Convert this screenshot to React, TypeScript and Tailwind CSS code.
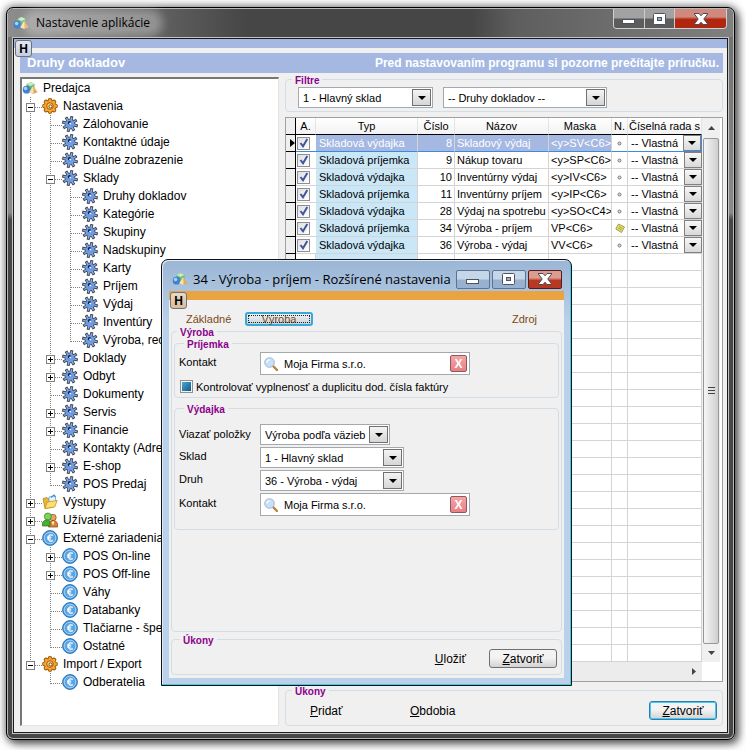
import { useState } from "react";
import type { ReactNode } from "react";

type IconName = "gear" | "cog" | "folder" | "users" | "euro";

type TreeItem = {
  label: string;
  icon: IconName;
  open?: boolean;
  children?: TreeItem[];
};

const leaf = (label: string, icon: IconName = "cog"): TreeItem => ({ label, icon });

const TREE: TreeItem[] = [
  {
    label: "Nastavenia",
    icon: "gear",
    open: true,
    children: [
      leaf("Zálohovanie"),
      leaf("Kontaktné údaje"),
      leaf("Duálne zobrazenie"),
      {
        label: "Sklady",
        icon: "cog",
        open: true,
        children: [
          leaf("Druhy dokladov"),
          leaf("Kategórie"),
          leaf("Skupiny"),
          leaf("Nadskupiny"),
          leaf("Karty"),
          leaf("Príjem"),
          leaf("Výdaj"),
          leaf("Inventúry"),
          leaf("Výroba, recepty"),
        ],
      },
      { label: "Doklady", icon: "cog", children: [] },
      { label: "Odbyt", icon: "cog", children: [] },
      leaf("Dokumenty"),
      { label: "Servis", icon: "cog", children: [] },
      { label: "Financie", icon: "cog", children: [] },
      leaf("Kontakty (Adresár)"),
      { label: "E-shop", icon: "cog", children: [] },
      leaf("POS Predaj"),
    ],
  },
  { label: "Výstupy", icon: "folder", children: [] },
  { label: "Užívatelia", icon: "users", children: [] },
  {
    label: "Externé zariadenia",
    icon: "euro",
    open: true,
    children: [
      { label: "POS On-line", icon: "euro", children: [] },
      { label: "POS Off-line", icon: "euro", children: [] },
      leaf("Váhy", "euro"),
      leaf("Databanky", "euro"),
      leaf("Tlačiarne - špeciálne", "euro"),
      leaf("Ostatné", "euro"),
    ],
  },
  {
    label: "Import / Export",
    icon: "gear",
    open: true,
    children: [leaf("Odberatelia", "euro")],
  },
];

const ROWS = [
  { type: "Skladová výdajka", num: 8, name: "Skladový výdaj", mask: "<y>SV<C6>" },
  { type: "Skladová príjemka", num: 9, name: "Nákup tovaru", mask: "<y>SP<C6>" },
  { type: "Skladová výdajka", num: 10, name: "Inventúrny výdaj", mask: "<y>IV<C6>" },
  { type: "Skladová príjemka", num: 11, name: "Inventúrny príjem", mask: "<y>IP<C6>" },
  { type: "Skladová výdajka", num: 28, name: "Výdaj na spotrebu", mask: "<y>SO<C4>" },
  { type: "Skladová príjemka", num: 34, name: "Výroba - príjem", mask: "VP<C6>", note: true },
  { type: "Skladová výdajka", num: 36, name: "Výroba - výdaj", mask: "VV<C6>" },
];

const EMPTY_ROWS = 24;

function Logo() {
  return (
    <svg viewBox="0 0 16 16" className="size-4 shrink-0">
      <path d="M4.500 4 8.500 2l4 2v4.500L8.500 10.500 4.500 8.500z" fill="#6dbb72" />
      <path d="M4.500 4 8.500 2l4 2-4 2z" fill="#c9ecc0" />
      <circle cx="4.600" cy="9.700" r="3.900" fill="#3f83cf" />
      <circle cx="3.600" cy="8.500" r="1.800" fill="#a9d2f5" />
      <path d="M11.200 6 15.600 12.300 11.500 14 7.300 12.300z" fill="#dfae5c" />
      <path d="M11.200 6 11.500 14 7.300 12.300z" fill="#f8e2ae" />
    </svg>
  );
}

function ItemIcon({ name }: { name: IconName }) {
  if (name === "gear") {
    return (
      <svg viewBox="0 0 16 16" className="size-4 shrink-0">
        <g stroke="#9a5205" strokeWidth="4.600" strokeLinecap="round">
          <path d="M8 2.400v11.200M2.400 8h11.200M4 4l8 8M12 4l-8 8" />
        </g>
        <g stroke="#f6a52e" strokeWidth="2.800" strokeLinecap="round">
          <path d="M8 2.400v11.200M2.400 8h11.200M4 4l8 8M12 4l-8 8" />
        </g>
        <circle cx="8" cy="8" r="5.200" fill="#f7a832" />
        <circle cx="8" cy="8" r="3.300" fill="#ffd079" stroke="#a15a08" />
        <circle cx="8.500" cy="8.400" r="1.500" fill="#fff" stroke="#7d4208" />
      </svg>
    );
  }
  if (name === "cog") {
    return (
      <svg viewBox="0 0 16 16" className="size-4 shrink-0">
        <g transform="rotate(14 8 8)">
          <path d="M8 0v16M0 8h16M2.500 2.500l11 11M13.500 2.500l-11 11" stroke="#3c4350" strokeWidth="3" />
          <circle cx="8" cy="8" r="5.300" fill="#3c4c68" />
          <path d="M8 1v14M1 8h14M3.200 3.200l9.600 9.600M12.800 3.200l-9.600 9.600" stroke="#8aaee6" strokeWidth="1.400" />
          <circle cx="8" cy="8" r="4.500" fill="#6e9ce4" />
        </g>
        <circle cx="7.500" cy="6.800" r="1.700" fill="#17233a" />
        <circle cx="8.200" cy="7.500" r="1" fill="#fff" />
      </svg>
    );
  }
  if (name === "folder") {
    return (
      <svg viewBox="0 0 16 16" className="size-4 shrink-0">
        <path d="M1 4.500 5 3.500l1 1.500 5-1v9L3 14.500z" fill="#e9b83a" stroke="#a87b16" strokeWidth=".7" />
        <path d="m7 3 6-1.500 1 6-7 2z" fill="#eaf4ff" stroke="#5b8fc4" strokeWidth=".7" />
        <path d="m9 3.500 3-2.300 1.500 2" fill="none" stroke="#2e9ad4" strokeWidth="1.200" />
        <path d="M3 14.500 5.200 8l10-1.500-2.500 6.500z" fill="#ffe06d" stroke="#b5871b" strokeWidth=".7" />
      </svg>
    );
  }
  if (name === "users") {
    return (
      <svg viewBox="0 0 16 16" className="size-4 shrink-0">
        <circle cx="11" cy="5.500" r="3.200" fill="#e8a35c" stroke="#81511f" strokeWidth=".7" />
        <path d="M6.500 15V11.500q1-3 4.500-3t4.500 3V15z" fill="#d98432" stroke="#81410f" strokeWidth=".7" />
        <circle cx="5.800" cy="4.500" r="3.500" fill="#7dd35d" stroke="#2c7f1e" strokeWidth=".7" />
        <path d="M.5 14v-3.500q1-2.500 5-2.500l2.500 1V14z" fill="#4cae35" stroke="#22701a" strokeWidth=".7" />
        <path d="m9.500 9.500 1.500 4 1.500-4z" fill="#fff1d2" />
      </svg>
    );
  }
  return (
    <svg viewBox="0 0 16 16" className="size-4 shrink-0">
      <circle cx="8" cy="8" r="7.400" fill="#3c8fd6" stroke="#2f74b6" />
      <circle cx="8" cy="8" r="5.900" fill="#5aa5e4" stroke="#b4dcf8" strokeWidth=".9" />
      <path d="M10.800 5.400Q6.800 3.400 6.300 8q.5 4.600 4.500 2.600M5 7.200h4.200M5 9h4.200" fill="none" stroke="#fff" strokeWidth="1.200" />
    </svg>
  );
}

// Dotted guide lines in front of a tree item, with the plus/minus box on top
function Branch({ last, state }: { last: boolean; state?: "open" | "closed" }) {
  return (
    <svg viewBox="0 0 20 18" className="block h-[18px] w-5 shrink-0" shapeRendering="crispEdges">
      <path d={last ? "M8.500 0V11" : "M8.500 0V18"} stroke="#808080" strokeDasharray="1 1" fill="none" />
      <path d="M9 10.500H20" stroke="#808080" strokeDasharray="1 1" fill="none" />
      {state && (
        <>
          <rect x="4.500" y="6.500" width="8" height="8" fill="#fff" stroke="#808080" />
          <path d={state === "open" ? "M6 10.500h5" : "M6 10.500h5M8.500 8v5"} stroke="#000" />
        </>
      )}
    </svg>
  );
}

function Guide({ line }: { line: boolean }) {
  return (
    <svg viewBox="0 0 20 18" className="block h-[18px] w-5 shrink-0" shapeRendering="crispEdges">
      {line && <path d="M8.500 0V18" stroke="#808080" strokeDasharray="1 1" />}
    </svg>
  );
}

function TreeRows({ items, guides }: { items: TreeItem[]; guides: boolean[] }) {
  const [toggled, setToggled] = useState<{ [key: string]: boolean }>({});

  return (
    <ul>
      {items.map((item, i) => {
        const last = i === items.length - 1;
        const open = toggled[item.label] ?? !!item.open;
        return (
          <li key={item.label}>
            <div className="flex h-[18px] items-center">
              {guides.map((line, g) => (
                <Guide key={g} line={line} />
              ))}
              {item.children ? (
                <button
                  aria-label={item.label}
                  aria-expanded={open}
                  onClick={() => setToggled((prev) => ({ ...prev, [item.label]: !open }))}
                >
                  <Branch last={last} state={open ? "open" : "closed"} />
                </button>
              ) : (
                <Branch last={last} />
              )}
              <ItemIcon name={item.icon} />
              <span className="pl-[5px] whitespace-nowrap">{item.label}</span>
            </div>
            {item.children && open && <TreeRows items={item.children} guides={[...guides, !last]} />}
          </li>
        );
      })}
    </ul>
  );
}

function Arrow() {
  return (
    <svg viewBox="0 0 8 4" className="h-1 w-2">
      <path d="M0 0h8L4 4z" fill="#000" />
    </svg>
  );
}

function Combo({ id, label, value, className }: { id: string; label?: string; value: string; className: string }) {
  return (
    <div className={`relative h-[21px] border border-[#a5a8ad] bg-white ${className}`}>
      <select id={id} aria-label={label} className="block h-full w-full appearance-none pl-1 outline-none">
        <option>{value}</option>
      </select>
      <span className="pointer-events-none absolute top-px right-px flex h-[17px] w-[19px] items-center justify-center border border-[#707070] bg-linear-to-b from-[#f4f4f4] to-[#d6d6d6]">
        <Arrow />
      </span>
    </div>
  );
}

function Group({ title, className, children }: { title: string; className: string; children?: ReactNode }) {
  return (
    <fieldset className={`min-w-0 rounded-[4px] border border-[#d3dde6] ${className}`}>
      <legend className="h-[10px] px-[3px] text-[10px] leading-[14px] font-bold text-[#8b008b]">{title}</legend>
      {children}
    </fieldset>
  );
}

function HelpButton({ className }: { className: string }) {
  return (
    <button
      className={`absolute flex size-[17px] items-center justify-center rounded-[3px] border border-[#6f7378] bg-linear-to-b text-[12px] font-bold ${className}`}
    >
      H
    </button>
  );
}

function ContactField({ id }: { id: string }) {
  return (
    <div className="flex h-[23px] w-[210px] items-center border border-[#a5a8ad] bg-white pr-[2px] pl-[3px]">
      <svg viewBox="0 0 14 14" className="size-[14px] shrink-0">
        <path d="m9 9 4 4" stroke="#b9813f" strokeWidth="2.400" strokeLinecap="round" />
        <circle cx="5.500" cy="5.500" r="4.800" fill="#c6e0f8" stroke="#9cb9d8" />
        <path d="M3 5.500Q3.200 3 5.500 2.800" stroke="#fff" strokeWidth="1.300" fill="none" />
      </svg>
      <input id={id} defaultValue="Moja Firma s.r.o." className="min-w-0 flex-1 pl-[6px] outline-none" />
      <button
        aria-label="Vymazať"
        className="flex size-[17px] shrink-0 items-center justify-center rounded-[2px] border border-[#8c5a5e] bg-linear-to-b from-[#f6a5a5] to-[#e87f83] text-[12px] font-bold text-white"
      >
        X
      </button>
    </div>
  );
}

function MinGlyph() {
  return (
    <svg viewBox="0 0 14 12" className="h-3 w-[14px]">
      <rect x=".5" y="6.500" width="12" height="4" fill="#fff" stroke="#4b5363" />
    </svg>
  );
}

function MaxGlyph() {
  return (
    <svg viewBox="0 0 14 12" className="h-3 w-[14px]">
      <rect x=".5" y=".5" width="12" height="11" rx="1" fill="#fff" stroke="#4b5363" />
      <rect x="4.500" y="4.500" width="4" height="3" fill="#9fb0c5" stroke="#4b5363" />
    </svg>
  );
}

function CloseGlyph() {
  return (
    <svg viewBox="0 0 14 12" className="h-3 w-[14px]">
      <path d="M0 .5h5l2 2.300L9 .5h5L9.800 6l4.200 5.500H9L7 9.200l-2 2.300H0L4.200 6z" fill="#fff" stroke="#4b4b5b" />
    </svg>
  );
}

function DocumentTable() {
  const [selected, setSelected] = useState(8);
  const cell = "h-[17px] overflow-hidden border-r border-b border-[#d4d4d4] whitespace-nowrap";

  return (
    <table className="w-full table-fixed border-separate border-spacing-0 bg-white leading-4">
      <colgroup>
        <col className="w-[10px]" />
        <col className="w-[20px]" />
        <col className="w-[102px]" />
        <col className="w-[37px]" />
        <col className="w-[94px]" />
        <col className="w-[63px]" />
        <col className="w-[16px]" />
        <col />
      </colgroup>
      <thead>
        <tr className="bg-linear-to-b from-white to-[#f1f1f1]">
          <th className="h-[17px] border-r border-b border-black bg-[#efefef]" />
          {["A.", "Typ", "Číslo", "Názov", "Maska", "N.", "Číselná rada s"].map((title) => (
            <th
              key={title}
              className="h-[17px] overflow-hidden border-r border-b border-r-[#e2e4e6] border-b-black text-center font-normal whitespace-nowrap"
            >
              {title}
            </th>
          ))}
        </tr>
      </thead>
      <tbody>
        {ROWS.map((row) => {
          const active = row.num === selected;
          const line = active ? "border-b-[#3b8ade] bg-[#a4b8e2] text-white" : "";
          return (
            <tr key={row.num} onClick={() => setSelected(row.num)}>
              <td className="h-[17px] border-r border-b border-black bg-[#efefef]">
                {active && (
                  <svg viewBox="0 0 5 8" className="ml-1 h-2 w-[5px]">
                    <path d="M0 0 5 4 0 8z" />
                  </svg>
                )}
              </td>
              <td className={`h-[17px] border-b ${active ? "border-b-[#3b8ade]" : "border-[#d4d4d4]"}`}>
                <label className="ml-px grid size-[13px] place-items-center border border-[#8e8f8f] bg-linear-to-br from-[#dcdfe4] to-white">
                  <input
                    type="checkbox"
                    defaultChecked
                    aria-label={row.name}
                    className="peer col-start-1 row-start-1 size-[11px] appearance-none"
                  />
                  <svg viewBox="0 0 10 10" className="invisible col-start-1 row-start-1 size-[10px] peer-checked:visible">
                    <path d="m1.500 5 2.500 3.300L8.300 1" fill="none" stroke="#44569b" strokeWidth="2" />
                  </svg>
                </label>
              </td>
              <td className={`${cell} pl-[3px] ${active ? line : "bg-[#c9e7f7]"}`}>{row.type}</td>
              <td className={`${cell} pr-[2px] text-right ${line}`}>{row.num}</td>
              <td className={`${cell} pl-[2px] ${line}`}>{row.name}</td>
              <td className={`${cell} pl-[2px] ${line}`}>{row.mask}</td>
              <td className={`${cell} ${active ? "border-b-[#3b8ade]" : ""}`}>
                {row.note ? (
                  <svg viewBox="0 0 10 10" className="mx-auto size-[10px]">
                    <path d="M3.500 1 9.500 4 6.500 9.500.8 6z" fill="#e3df6c" stroke="#8f8c3c" strokeWidth=".8" />
                    <path d="m4 3.500 3.500 2M3 5l3.500 2" stroke="#8f8c3c" strokeWidth=".7" />
                  </svg>
                ) : (
                  <svg viewBox="0 0 5 5" className="mx-auto size-[5px]">
                    <circle cx="2.500" cy="2.500" r="1.500" fill="#ddd" stroke="#777" />
                  </svg>
                )}
              </td>
              <td className={`h-[17px] border-b ${active ? "border-r border-[#3b8ade]" : "border-[#d4d4d4]"}`}>
                <div className="relative h-4">
                  <select aria-label="Číselná rada" className="block h-4 w-full appearance-none pl-[3px] outline-none">
                    <option>-- Vlastná</option>
                  </select>
                  <span className="pointer-events-none absolute top-0 right-0 flex h-4 w-[18px] items-center justify-center border border-[#808080] bg-linear-to-b from-[#f7f7f7] to-[#d9d9d9]">
                    <Arrow />
                  </span>
                </div>
              </td>
            </tr>
          );
        })}
        {Array.from({ length: EMPTY_ROWS }, (_, i) => (
          <tr key={i}>
            <td className="h-[17px] border-r border-b border-black bg-[#efefef]" />
            <td className={cell} />
            <td className={`${cell} bg-[#c9e7f7]`} />
            <td className={cell} />
            <td className={cell} />
            <td className={cell} />
            <td className={cell} />
            <td className={cell} />
          </tr>
        ))}
      </tbody>
    </table>
  );
}

function SettingsDialog() {
  return (
    <section className="absolute top-[259px] left-[161px] w-[411px] rounded-t-[7px] border border-[#111] bg-linear-to-b from-[#9bb6d5] via-[#b9d1ea] via-15% to-[#b9d1ea] shadow-[inset_-1px_-1px_0_#35cfe6,inset_1px_1px_0_#dfeaf6]">
      <header className="flex h-[31px] items-center pt-[7px] pr-[9px] pl-[10px]">
        <Logo />
        <h2 className="min-w-0 flex-1 pl-[5px] font-['Open_Sans',sans-serif] text-[13px] whitespace-nowrap">
          34 - Výroba - príjem - Rozšírené nastavenia
        </h2>
        <div className="flex gap-[2px]">
          <button
            aria-label="Minimalizovať"
            className="flex h-[19px] w-[34px] items-center justify-center rounded-[2px] border border-[#5d7390] bg-linear-to-b from-[#c6d6e9] from-45% to-[#98b1cf] to-55%"
          >
            <MinGlyph />
          </button>
          <button
            aria-label="Maximalizovať"
            className="flex h-[19px] w-[34px] items-center justify-center rounded-[2px] border border-[#5d7390] bg-linear-to-b from-[#c6d6e9] from-45% to-[#98b1cf] to-55%"
          >
            <MaxGlyph />
          </button>
          <button
            aria-label="Zavrieť"
            className="flex h-[19px] w-[34px] items-center justify-center rounded-[2px] border border-[#551c20] bg-linear-to-b from-[#dd9c90] from-40% to-[#b93822] to-55%"
          >
            <CloseGlyph />
          </button>
        </div>
      </header>

      <div className="relative mx-[7px] mb-[7px] bg-[#f0f0f0] pb-[3px]">
        <div className="h-[9px] bg-[#eaa341]" />
        <HelpButton className="top-px left-px from-[#ead9c4] to-[#d9bd9a]" />
        <nav className="flex h-[35px] items-end pr-[27px] pb-[9px] pl-[17px] text-[#7b4a12]">
          <button className="h-[14px] w-[59px] text-left leading-[14px]">Základné</button>
          <button className="h-[14px] w-[68px] rounded-[3px] border-2 border-[#3aa8d6] bg-linear-to-b from-[#eef3f6] to-[#c9d3da] leading-[10px] outline-1 -outline-offset-4 outline-[#222] outline-dotted">
            Výroba
          </button>
          <button className="ml-auto h-[14px] leading-[14px]">Zdroj</button>
        </nav>

        <div className="-mt-[9px] px-[2px]">
          <Group title="Výroba" className="px-[2px] pb-[101px] [&>legend]:ml-[3px]">
            <Group title="Príjemka" className="mt-[2px] px-1 pb-1 [&>legend]:ml-[5px]">
              <div className="mt-1 flex">
                <label htmlFor="income-contact" className="w-[81px] pt-[3px]">
                  Kontakt
                </label>
                <ContactField id="income-contact" />
              </div>
              <label className="mt-[5px] flex h-[13px] items-center gap-[3px] pl-px whitespace-nowrap">
                <input
                  type="checkbox"
                  defaultChecked
                  className="size-[13px] shrink-0 appearance-none border border-[#8e8f8f] bg-white p-px shadow-[inset_0_0_0_1px_#f4f4f4] checked:bg-linear-to-br checked:from-[#4fb4dc] checked:to-[#0d4f7e] checked:bg-clip-content"
                />
                Kontrolovať vyplnenosť a duplicitu dod. čísla faktúry
              </label>
            </Group>
            <Group title="Výdajka" className="mt-[5px] px-1 pb-[13px] [&>legend]:ml-[5px]">
              <div className="mt-[11px] flex flex-col gap-[2px]">
                <div className="flex">
                  <label htmlFor="bind" className="w-[81px] pt-[3px]">
                    Viazať položky
                  </label>
                  <Combo id="bind" value="Výroba podľa väzieb" className="w-[130px]" />
                </div>
                <div className="flex">
                  <label htmlFor="store" className="w-[81px] pt-[2px]">
                    Sklad
                  </label>
                  <Combo id="store" value="1 - Hlavný sklad" className="w-[144px]" />
                </div>
                <div className="flex">
                  <label htmlFor="kind" className="w-[81px] pt-[2px]">
                    Druh
                  </label>
                  <Combo id="kind" value="36 - Výroba - výdaj" className="w-[144px]" />
                </div>
                <div className="flex">
                  <label htmlFor="issue-contact" className="w-[81px] pt-[3px]">
                    Kontakt
                  </label>
                  <ContactField id="issue-contact" />
                </div>
              </div>
            </Group>
          </Group>
          <Group title="Úkony" className="mt-[2px] px-1 pb-[6px] [&>legend]:ml-1">
            <div className="mt-[5px] flex items-center justify-end gap-[23px] text-[12px]">
              <button>
                <u>U</u>ložiť
              </button>
              <button className="h-[19px] w-[68px] rounded-[3px] border border-[#707070] bg-linear-to-b from-[#f3f3f3] from-45% to-[#d3d3d3] leading-none">
                <u>Z</u>atvoriť
              </button>
            </div>
          </Group>
        </div>
      </div>
    </section>
  );
}

export default function App() {
  return (
    <div className="relative flex min-h-screen overflow-hidden bg-white pt-[7px] pr-[11px] pb-[10px] pl-[6px] font-['Liberation_Sans',Arial,sans-serif] text-[11px] leading-[14px] text-black">
      <main className="flex min-w-0 flex-1 flex-col rounded-[7px] border border-black bg-linear-to-b from-[#6e6e6e] from-0% via-[#8a8a8a] via-28% to-[#474747] to-29% px-[5px] pb-[5px] shadow-[inset_0_0_0_1px_#b8b8b8,0_0_8px_1px_rgba(0,0,0,0.5),4px_4px_9px_rgba(0,0,0,0.5)]">
        <header className="-mx-1 mt-px flex h-[28px] shrink-0 rounded-t-[6px] bg-[linear-gradient(90deg,#8d8d8d,#464646_33%,#464646_64%,#5e5e5e_70%,#808080)] pl-[5px]">
          <div className="flex flex-1 items-center">
            <Logo />
            <h1 className="rounded-full bg-white/30 px-[7px] font-['Open_Sans',sans-serif] text-[12px] leading-4 shadow-[0_0_8px_6px_rgba(255,255,255,0.3)]">
              Nastavenie aplikácie
            </h1>
          </div>
          <div className="mr-[6px] flex h-5 overflow-hidden rounded-b-[4px] border border-t-0 border-[#d0d0d0]">
            <button
              aria-label="Minimalizovať"
              className="flex w-[31px] items-center justify-center border-r border-[#ccc] bg-linear-to-b from-[#a2a2a2] from-45% to-[#5c5c5c] to-55%"
            >
              <MinGlyph />
            </button>
            <button
              aria-label="Maximalizovať"
              className="flex w-[30px] items-center justify-center border-r border-[#ccc] bg-linear-to-b from-[#a2a2a2] from-45% to-[#5c5c5c] to-55%"
            >
              <MaxGlyph />
            </button>
            <button
              aria-label="Zavrieť"
              className="flex w-[51px] items-center justify-center bg-linear-to-b from-[#cf8a7d] from-40% to-[#b0260f] to-55%"
            >
              <CloseGlyph />
            </button>
          </div>
        </header>

        <div className="relative flex flex-1 flex-col border border-[#c4c4c4]">
          <div className="flex flex-1 flex-col border border-[#1a1a1a] bg-[#f0f0f0]">
            <div className="h-[9px] bg-[#a4b8e2]" />
            <HelpButton className="top-[2px] left-[2px] from-[#e3e8f2] to-[#c3cde2]" />
            <div className="mt-[5px] mr-1 ml-[6px] flex h-5 items-center justify-between bg-[#a4b8e2] pr-1 pl-[7px] font-bold text-white">
              <h2 className="text-[13px]">Druhy dokladov</h2>
              <p className="text-[12px]">Pred nastavovaním programu si pozorne prečítajte príručku.</p>
            </div>

            <div className="flex flex-1 gap-[6px] pr-1 pb-[6px] pl-[6px]">
              <div className="mt-1 w-[259px] shrink-0 overflow-hidden border border-t-2 border-l-2 border-[#e3e3e3] border-t-[#777] border-l-[#777] bg-white text-[12px]">
                <div className="flex h-[18px] items-center">
                  <Logo />
                  <span className="pl-[5px]">Predajca</span>
                </div>
                <TreeRows items={TREE} guides={[]} />
              </div>

              <div className="flex min-w-0 flex-1 flex-col pt-px">
                <Group title="Filtre" className="px-3 pb-[3px] [&>legend]:-ml-[6px]">
                  <div className="mt-[3px] flex gap-[10px]">
                    <Combo id="filter-store" label="Sklad" value="1 - Hlavný sklad" className="w-[135px]" />
                    <Combo id="filter-kind" label="Druh" value="-- Druhy dokladov --" className="w-[164px]" />
                  </div>
                </Group>

                <div className="mt-[5px] flex flex-col border border-[#a0a0a0] bg-white">
                  <div className="flex pr-[2px]">
                    <div className="min-w-0 flex-1 overflow-hidden">
                      <DocumentTable />
                    </div>
                    <div className="flex w-[18px] shrink-0 flex-col items-center bg-[#f0f0f0]">
                      <button aria-label="Nahor" className="flex h-5 w-full items-center justify-center">
                        <svg viewBox="0 0 7 4" className="h-1 w-[7px]">
                          <path d="M0 4h7L3.500 0z" fill="#444" />
                        </svg>
                      </button>
                      <div className="flex w-4 flex-1 items-center justify-center rounded-[2px] border border-[#979797] bg-linear-to-r from-[#f6f6f6] to-[#cfcfcf]">
                        <svg viewBox="0 0 7 8" className="h-2 w-[7px]">
                          <path d="M0 .5h7M0 3.500h7M0 6.500h7" stroke="#444" />
                        </svg>
                      </div>
                      <button aria-label="Nadol" className="flex h-[18px] w-full items-center justify-center">
                        <svg viewBox="0 0 7 4" className="h-1 w-[7px]">
                          <path d="M0 0h7L3.500 4z" fill="#444" />
                        </svg>
                      </button>
                    </div>
                  </div>
                  <div className="mr-5 flex h-[19px] items-center justify-end bg-[#ececec] pr-[6px]">
                    <button aria-label="Doprava">
                      <svg viewBox="0 0 4 7" className="h-[7px] w-1">
                        <path d="M0 0v7l4-3.500z" fill="#444" />
                      </svg>
                    </button>
                  </div>
                </div>

                <Group title="Úkony" className="mt-[3px] pr-[5px] pb-[5px] pl-6 [&>legend]:-ml-[18px]">
                  <div className="mt-[6px] flex items-center text-[12px]">
                    <button className="w-[100px] text-left">
                      <u>P</u>ridať
                    </button>
                    <button>
                      <u>O</u>bdobia
                    </button>
                    <button className="ml-auto h-[19px] w-[68px] rounded-[3px] border border-[#2c7fb0] bg-linear-to-b from-[#f3f3f3] from-45% to-[#d3d3d3] leading-none shadow-[inset_0_0_0_1px_#48c8ee]">
                      <u>Z</u>atvoriť
                    </button>
                  </div>
                </Group>
              </div>
            </div>
          </div>
        </div>
      </main>

      <SettingsDialog />
    </div>
  );
}
